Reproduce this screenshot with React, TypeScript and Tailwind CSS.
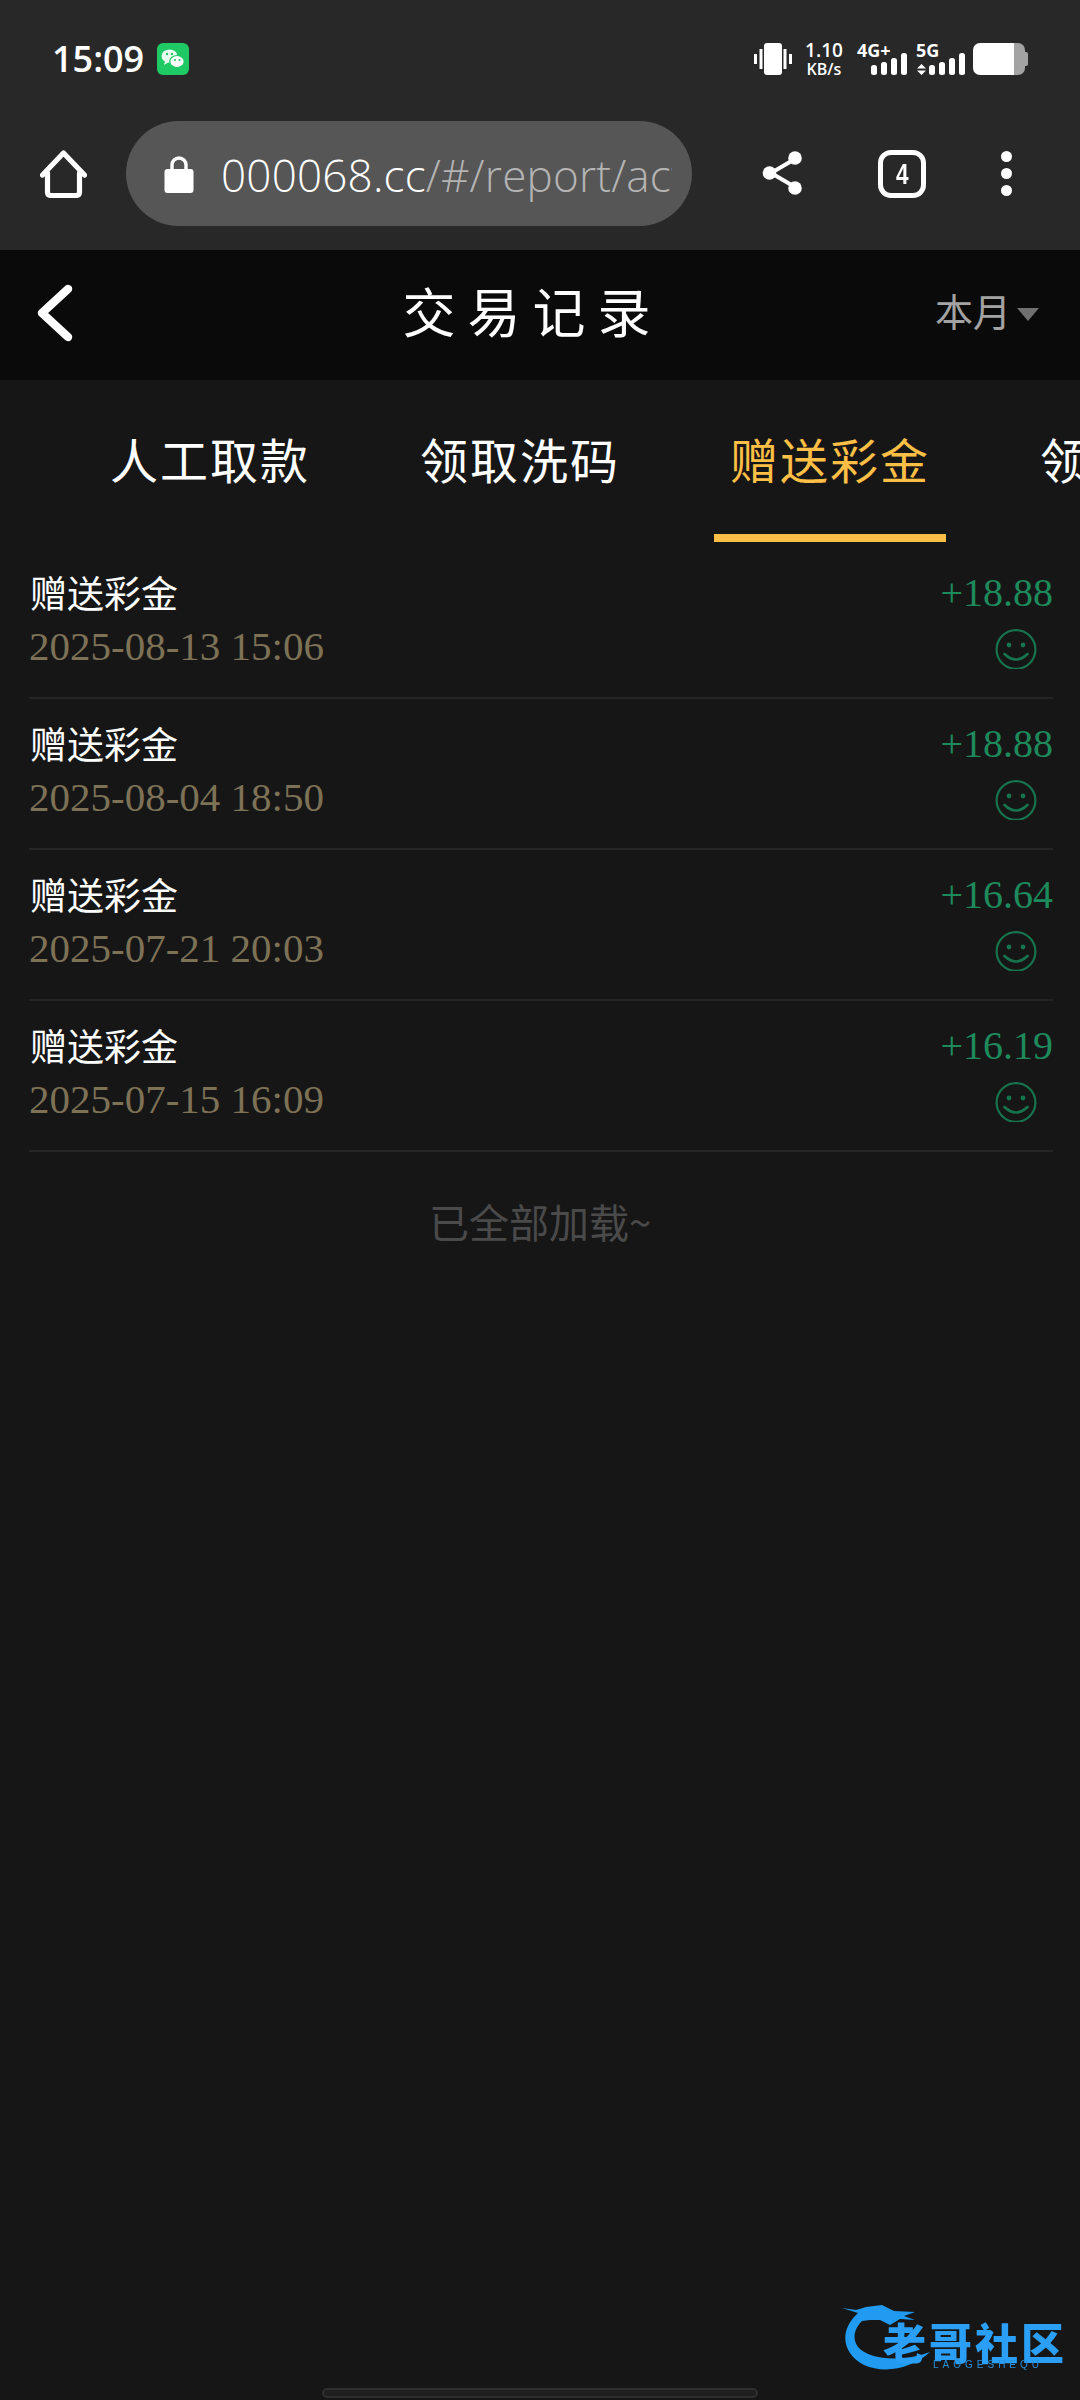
import React from "react";

const cjk = "font-['Noto_Sans_CJK_SC','Noto_Sans',sans-serif]";
const records = [
  { date: "2025-08-13 15:06", amount: "+18.88" },
  { date: "2025-08-04 18:50", amount: "+18.88" },
  { date: "2025-07-21 20:03", amount: "+16.64" },
  { date: "2025-07-15 16:09", amount: "+16.19" },
];

function Bars({ className }: { className?: string }) {
  return (
    <svg width="36" height="22" viewBox="0 0 36 22" className={className}>
      <rect x="0" y="12" width="6" height="10" rx="2.5" fill="#fff" />
      <rect x="10" y="9" width="6" height="13" rx="2.5" fill="#fff" />
      <rect x="20" y="5" width="6" height="17" rx="2.5" fill="#fff" />
      <rect x="30" y="0" width="6" height="22" rx="2.5" fill="#fff" />
    </svg>
  );
}

function Smile() {
  return (
    <svg width="42" height="40" viewBox="0 0 42 40" className="overflow-hidden">
      <circle cx="21" cy="20.5" r="19.4" fill="none" stroke="#17744f" strokeWidth="2.2" />
      <circle cx="14" cy="16" r="2.4" fill="#17744f" />
      <circle cx="28" cy="16" r="2.4" fill="#17744f" />
      <path d="M9.5 25 Q21 36 32.5 25" fill="none" stroke="#17744f" strokeWidth="2.6" strokeLinecap="round" />
    </svg>
  );
}

function StatusBar() {
  return (
    <div className="flex h-[118px] items-start justify-between pt-[43px] pl-[52px] pr-[52px]">
      <div className="flex items-center gap-[13px]">
        <span className="font-['Open_Sans',sans-serif] text-[36px] leading-[32px] font-semibold text-white">15:09</span>
        <svg width="32" height="32" viewBox="0 0 32 32">
          <rect width="32" height="32" rx="6" fill="#1fc963" />
          <ellipse cx="12.5" cy="13" rx="8" ry="6.6" fill="#e9fff2" />
          <path d="M8 18 L7 22 L12 19 Z" fill="#e9fff2" />
          <ellipse cx="20" cy="18.5" rx="7.2" ry="6" fill="#fff" stroke="#1fc963" strokeWidth="1.2" />
          <circle cx="10" cy="11" r="1.2" fill="#1fc963" />
          <circle cx="15" cy="11" r="1.2" fill="#1fc963" />
          <circle cx="18" cy="17" r="1.1" fill="#1fc963" />
          <circle cx="22.5" cy="17" r="1.1" fill="#1fc963" />
        </svg>
      </div>
      <div className="flex items-start">
        <svg width="38" height="32" viewBox="0 0 38 32" className="mr-[14px]">
          <rect x="10" y="0" width="18" height="32" rx="3" fill="#fff" />
          <rect x="0" y="11" width="3" height="10" fill="#fff" />
          <rect x="5.5" y="6" width="3" height="20" fill="#fff" />
          <rect x="29.5" y="6" width="3" height="20" fill="#fff" />
          <rect x="35" y="11" width="3" height="10" fill="#fff" />
        </svg>
        <div className="mr-[15px] flex w-[36px] flex-col items-center font-['Open_Sans',sans-serif] font-semibold text-white">
          <span className="h-[15px] text-[19px] leading-[15px] whitespace-nowrap">1.10</span>
          <span className="mt-[3px] h-[17px] text-[16px] leading-[17px] whitespace-nowrap">KB/s</span>
        </div>
        <div className="relative h-[32px] w-[59px]">
          <span className="absolute top-[-2px] left-0 font-['Open_Sans',sans-serif] text-[18px] leading-[18px] font-bold text-white">4G+</span>
          <Bars className="absolute top-[10px] left-[14px]" />
        </div>
        <div className="relative h-[32px] w-[48px]">
          <span className="absolute top-[-2px] left-0 font-['Open_Sans',sans-serif] text-[18px] leading-[18px] font-bold text-white">5G</span>
          <svg width="9" height="11" viewBox="0 0 9 11" className="absolute top-[21px] left-[1px]">
            <path d="M4.5 0 L9 4.5 H0 Z M4.5 11 L9 6.5 H0 Z" fill="#fff" />
          </svg>
          <Bars className="absolute top-[10px] left-[13px]" />
        </div>
        <div className="ml-[9px] flex h-[32px] w-[55px] items-center">
          <div className="flex h-full w-[52px] overflow-hidden rounded-[7px]">
            <div className="h-full w-[41px] bg-white" />
            <div className="h-full flex-1 bg-[#a3a3a3]" />
          </div>
          <div className="h-[14px] w-[3px] rounded-r-[2px] bg-[#a3a3a3]" />
        </div>
      </div>
    </div>
  );
}

function BrowserBar() {
  return (
    <div className="flex h-[132px] items-start pl-[40px]">
      <svg width="47" height="48" viewBox="0 0 47 48" className="mt-[32px] shrink-0">
        <path d="M2.5 25 L23.5 3 L44.5 25 M7.5 23 V42 Q7.5 45.5 11 45.5 H36 Q39.5 45.5 39.5 42 V23" fill="none" stroke="#fff" strokeWidth="5.2" strokeLinecap="round" strokeLinejoin="round" />
      </svg>
      <div className="ml-[39px] mt-[3px] flex h-[105px] w-[566px] shrink-0 items-center rounded-full bg-[#565656] pl-[38px] pr-[20px]">
        <svg width="30" height="38" viewBox="0 0 30 38" className="shrink-0">
          <path d="M8 16 V10 a7 7 0 0 1 14 0 V16" fill="none" stroke="#fff" strokeWidth="3.4" />
          <rect x="0.5" y="14" width="29" height="24" rx="3" fill="#fff" />
        </svg>
        <div className="ml-[27px] mt-[2px] min-w-0 flex-1 overflow-hidden whitespace-nowrap font-['Open_Sans',sans-serif] text-[44px] leading-[60px] font-[350] tracking-[0.2px]">
          <span className="text-white">000068.cc</span>
          <span className="text-[#b4b4b4]">/#/report/activity</span>
        </div>
      </div>
      <svg width="44" height="46" viewBox="0 0 44 46" className="ml-[70px] mt-[32px] shrink-0">
        <path d="M33 9 L9 23 L33 37" fill="none" stroke="#fff" strokeWidth="4" />
        <circle cx="33" cy="8" r="6.8" fill="#fff" />
        <circle cx="7.5" cy="23" r="6.8" fill="#fff" />
        <circle cx="33" cy="38" r="6.8" fill="#fff" />
      </svg>
      <div className="ml-[72px] mt-[32px] flex h-[48px] w-[48px] shrink-0 items-center justify-center rounded-[13px] border-[5px] border-white font-['Liberation_Sans',sans-serif] text-[30px] leading-[30px] font-bold text-white">
        <span className="scale-x-75">4</span>
      </div>
      <div className="ml-[75px] mt-[33px] flex shrink-0 flex-col gap-[6px]">
        <div className="h-[11px] w-[11px] rounded-full bg-white" />
        <div className="h-[11px] w-[11px] rounded-full bg-white" />
        <div className="h-[11px] w-[11px] rounded-full bg-white" />
      </div>
    </div>
  );
}

function Header() {
  return (
    <div className="flex h-[130px] items-center justify-between bg-[#0a0a0a] pl-[36px] pr-[41px]">
      <svg width="38" height="60" viewBox="0 0 38 60" className="mb-[4px]">
        <path d="M32 6 L6 30 L32 54" fill="none" stroke="#fff" strokeWidth="8.5" strokeLinecap="round" strokeLinejoin="round" />
      </svg>
      <div className={`${cjk} mb-[11px] ml-[56px] text-[53px] leading-[60px] tracking-[12px] text-white`}>交易记录</div>
      <div className="mb-[10px] flex items-center">
        <span className={`${cjk} text-[38px] leading-[50px] text-[#a3a3a3]`}>本月</span>
        <svg width="22" height="13" viewBox="0 0 22 13" className="ml-[6px] mt-[8px]">
          <path d="M0 0 H22 L11 13 Z" fill="#707070" />
        </svg>
      </div>
    </div>
  );
}

function Tabs() {
  const tabs = ["人工取款", "领取洗码", "赠送彩金", "领取优惠"];
  return (
    <div className="flex h-[168px] overflow-hidden pl-[55px]">
      {tabs.map((t, i) => (
        <div key={t} className="flex h-[162px] w-[310px] shrink-0 justify-center">
          <div
            className={`${cjk} w-[232px] whitespace-nowrap border-b-[8px] pt-[47px] text-center text-[48px] leading-[62px] tracking-[2px] ${
              i === 2 ? "border-[#fdbf45] text-[#fdbf45]" : "border-transparent text-white"
            }`}
          >
            {t}
          </div>
        </div>
      ))}
    </div>
  );
}

function Row({ date, amount }: { date: string; amount: string }) {
  return (
    <div className="flex h-[151px] items-start justify-between border-b-2 border-[#252525] pt-[21px]">
      <div className="flex flex-col">
        <span className={`${cjk} ml-[1px] text-[37px] leading-[46px] text-white`}>赠送彩金</span>
        <span className="mt-[6px] font-['Liberation_Serif',serif] text-[41px] leading-[50px] text-[#7d7156]">{date}</span>
      </div>
      <div className="flex flex-col items-end">
        <span className="mt-[1px] font-['Liberation_Serif',serif] text-[40px] leading-[46px] text-[#1d8a5c]">{amount}</span>
        <div className="mt-[13px] mr-[16px]">
          <Smile />
        </div>
      </div>
    </div>
  );
}

export default function App() {
  return (
    <div className="relative flex h-[2400px] w-[1080px] flex-col overflow-hidden bg-[#161616]">
      <div className="bg-[#282828]">
        <StatusBar />
        <BrowserBar />
      </div>
      <Header />
      <Tabs />
      <div className="pl-[29px] pr-[27px]">
        {records.map((r) => (
          <Row key={r.date} {...r} />
        ))}
      </div>
      <div className={`${cjk} mt-[44px] text-center text-[40px] leading-[50px] text-[#4a4a4a]`}>已全部加载~</div>
      <div className="flex-1" />
      <div className="mx-auto mb-[2px] h-[10px] w-[436px] rounded-full border-2 border-[#2e2e2e] bg-[#1f1f1f]" />

      <div className="absolute left-[842px] top-[2305px] h-[68px] w-[222px] blur-[0.6px]">
        <svg width="120" height="68" viewBox="0 0 120 68" className="absolute left-0 top-0">
          <path d="M0 3 L14 5 L24 2 L40 0 L52 6 L73 7 L62 11 L73 15 L58 14 L48 20 L38 15 L28 15 L20 16 C12 24 10 34 16 42 C26 54 58 58 88 47 C72 62 44 70 22 60 C2 50 -4 28 14 10 L16 8 Z" fill="#219bf2" />
        </svg>
        <span className={`${cjk} absolute left-[41px] top-[17px] whitespace-nowrap text-[43px] leading-[38px] font-black tracking-[3px] text-[#2a9ff5]`}>老哥社区</span>
        <span className="absolute left-[91px] top-[55px] whitespace-nowrap font-['Liberation_Sans',sans-serif] text-[10px] leading-[10px] tracking-[4px] text-[#2a8fd8]">LAOGESHEQU</span>
      </div>
    </div>
  );
}
